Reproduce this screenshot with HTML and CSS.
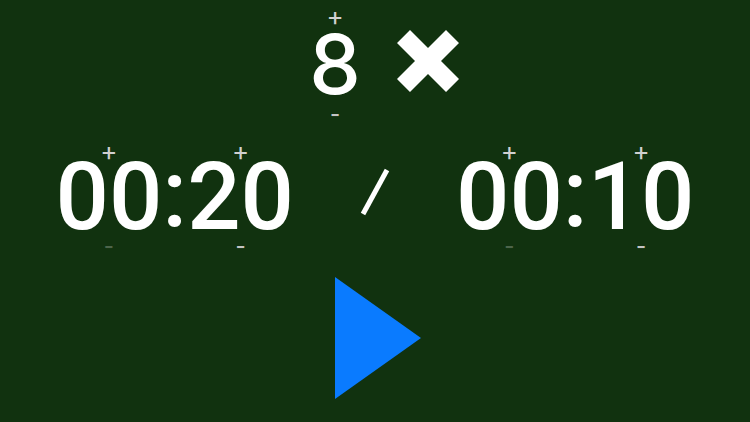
FILE: index.html
```html
<!DOCTYPE html>
<html>
<head>
<meta charset="utf-8">
<link rel="stylesheet" href="styles.css">
</head>
<body>
<div class="app">
  <div class="top-row">
    <div class="stepper counter">
      <span class="plus">+</span>
      <span class="count">8</span>
      <span class="minus">-</span>
    </div>
    <svg class="close" width="62" height="62" viewBox="0 0 62 62">
      <polygon fill="#fff" points="13,0 31,18 49,0 62,13 44,31 62,49 49,62 31,44 13,62 0,49 18,31 0,13"/>
    </svg>
  </div>
  <div class="timer-row">
    <div class="timer">
      <div class="stepper">
        <span class="plus">+</span>
        <span class="digits">00</span>
        <span class="minus dim">-</span>
      </div>
      <span class="colon">:</span>
      <div class="stepper">
        <span class="plus">+</span>
        <span class="digits">20</span>
        <span class="minus">-</span>
      </div>
    </div>
    <svg class="slash" width="30" height="50" viewBox="0 0 30 50">
      <line x1="3" y1="47" x2="27" y2="3" stroke="#fff" stroke-width="5"/>
    </svg>
    <div class="timer">
      <div class="stepper">
        <span class="plus">+</span>
        <span class="digits">00</span>
        <span class="minus dim">-</span>
      </div>
      <span class="colon">:</span>
      <div class="stepper">
        <span class="plus">+</span>
        <span class="digits">10</span>
        <span class="minus">-</span>
      </div>
    </div>
  </div>
  <div class="play-row">
    <svg class="play" width="86" height="122" viewBox="0 0 86 122">
      <polygon fill="#0a7bff" points="0,0 86,61 0,122"/>
    </svg>
  </div>
</div>
</body>
</html>
```
FILE: styles.css
```css
html, body {
  margin: 0;
  padding: 0;
  background: #11320f;
  width: 750px;
  height: 422px;
  overflow: hidden;
  font-family: Inter, "Noto Sans", sans-serif;
  color: #fff;
}
.app {
  display: flex;
  flex-direction: column;
  align-items: center;
}
.top-row {
  display: flex;
  align-items: center;
  gap: 36px;
  margin-left: 18px;
  height: 130px;
}
.close {
  margin-top: -8px;
}
.stepper {
  display: flex;
  flex-direction: column;
  align-items: center;
}
.plus {
  font-size: 26px;
  line-height: 18px;
  color: #d0d0d0;
  font-weight: 400;
}
.minus {
  font-size: 22px;
  line-height: 18px;
  color: #c4c4c4;
  font-weight: 500;
}
.minus.dim {
  color: #4d654b;
}
.count {
  font-size: 82px;
  line-height: 80px;
  font-weight: 500;
}
.timer-row {
  display: flex;
  align-items: center;
  gap: 66px;
  height: 130px;
  padding-top: 3px;
}
.timer-row .plus {
  margin-bottom: -3px;
}
.timer {
  display: flex;
  align-items: center;
}
.digits, .colon {
  font-family: Roboto, Inter, sans-serif;
  font-size: 94px;
  line-height: 80px;
  font-weight: 500;
}
.colon {
  margin-top: -8px;
}
.slash {
  margin-top: -12px;
}
.play-row {
  display: flex;
  justify-content: center;
  margin-left: 6px;
  padding-top: 14px;
}
```
